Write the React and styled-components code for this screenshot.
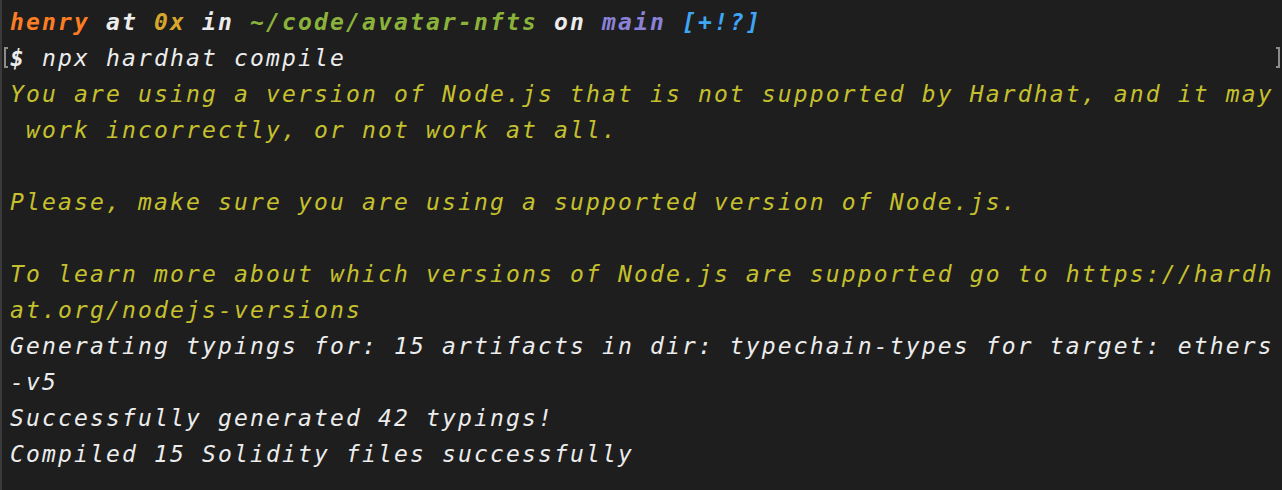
import React from "react";
import styled, { createGlobalStyle } from "styled-components";

const Global = createGlobalStyle`
  html, body { margin: 0; padding: 0; background: #1e1e1e; }
  #root { min-height: 490px; }
`;

const Terminal = styled.div`
  box-sizing: border-box;
  width: 1282px;
  height: 490px;
  background: #1e1e1e;
  border-left: 2px solid #3a3a3a;
  padding: 4px 0 0 8px;
  font-family: "DejaVu Sans Mono", "Liberation Mono", monospace;
  font-style: italic;
  font-size: 23px;
  letter-spacing: 2.15px;
  color: #ececec;
  overflow: hidden;
`;

const Line = styled.div`
  position: relative;
  height: 36px;
  line-height: 36px;
  white-space: pre;
  color: ${(p) => p.$color || "#ececec"};
`;

const Seg = styled.span`
  color: ${(p) => p.$color || "inherit"};
  font-weight: ${(p) => (p.$bold ? 700 : 400)};
`;

const Mark = styled.span`
  position: absolute;
  top: 7px;
  ${(p) => (p.$side === "left" ? "left: -6px;" : "left: 1266px;")}
  width: 4px;
  height: 21px;
  box-sizing: border-box;
  border: 2px solid #8c8c8c;
  ${(p) => (p.$side === "left" ? "border-right: none;" : "border-left: none;")}
`;

const YEL = "#c5c02e";

export default function App() {
  return (
    <>
      <Global />
      <Terminal>
        <Line>
          <Seg $bold $color="#fb7d24">henry</Seg>
          <Seg $bold> at </Seg>
          <Seg $bold $color="#d9a62c">0x</Seg>
          <Seg $bold> in </Seg>
          <Seg $bold $color="#8bb33c">~/code/avatar-nfts</Seg>
          <Seg $bold> on </Seg>
          <Seg $bold $color="#8a82d6">main</Seg>
          <Seg $bold> </Seg>
          <Seg $bold $color="#3ea6f4">[+!?]</Seg>
        </Line>
        <Line>
          <Mark $side="left" />
          <Seg $bold>$</Seg> npx hardhat compile
          <Mark $side="right" />
        </Line>
        <Line $color={YEL}>You are using a version of Node.js that is not supported by Hardhat, and it may</Line>
        <Line $color={YEL}> work incorrectly, or not work at all.</Line>
        <Line />
        <Line $color={YEL}>Please, make sure you are using a supported version of Node.js.</Line>
        <Line />
        <Line $color={YEL}>To learn more about which versions of Node.js are supported go to https://hardh</Line>
        <Line $color={YEL}>at.org/nodejs-versions</Line>
        <Line>Generating typings for: 15 artifacts in dir: typechain-types for target: ethers</Line>
        <Line>-v5</Line>
        <Line>Successfully generated 42 typings!</Line>
        <Line>Compiled 15 Solidity files successfully</Line>
      </Terminal>
    </>
  );
}
